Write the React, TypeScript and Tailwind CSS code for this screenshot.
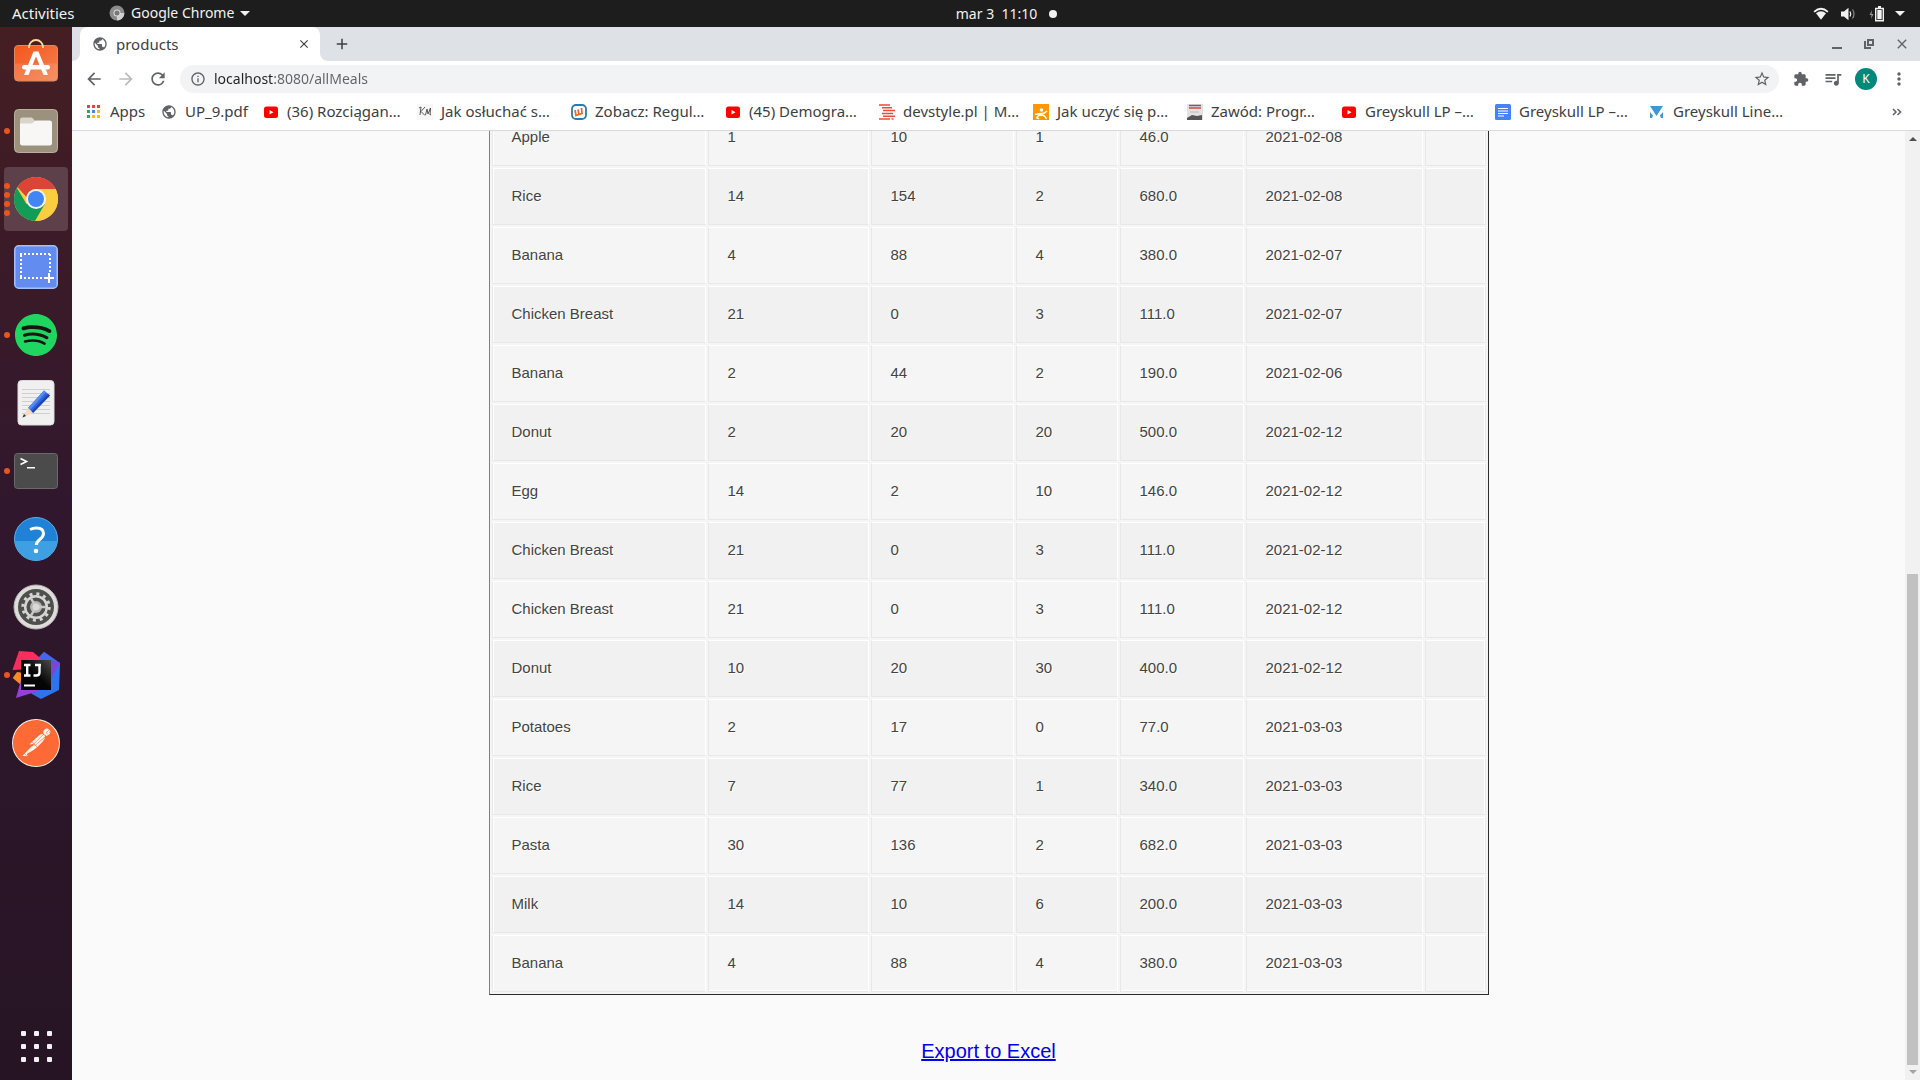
import type { ReactNode } from "react";
import {
  MdArrowBack,
  MdArrowForward,
  MdClose,
  MdExtension,
  MdInfoOutline,
  MdMoreVert,
  MdAdd,
  MdPublic,
  MdQueueMusic,
  MdRefresh,
  MdStarBorder,
} from "react-icons/md";
import { SiPostman, SiSpotify } from "react-icons/si";

const meals = [
  ["Apple", "1", "10", "1", "46.0", "2021-02-08"],
  ["Rice", "14", "154", "2", "680.0", "2021-02-08"],
  ["Banana", "4", "88", "4", "380.0", "2021-02-07"],
  ["Chicken Breast", "21", "0", "3", "111.0", "2021-02-07"],
  ["Banana", "2", "44", "2", "190.0", "2021-02-06"],
  ["Donut", "2", "20", "20", "500.0", "2021-02-12"],
  ["Egg", "14", "2", "10", "146.0", "2021-02-12"],
  ["Chicken Breast", "21", "0", "3", "111.0", "2021-02-12"],
  ["Chicken Breast", "21", "0", "3", "111.0", "2021-02-12"],
  ["Donut", "10", "20", "30", "400.0", "2021-02-12"],
  ["Potatoes", "2", "17", "0", "77.0", "2021-03-03"],
  ["Rice", "7", "77", "1", "340.0", "2021-03-03"],
  ["Pasta", "30", "136", "2", "682.0", "2021-03-03"],
  ["Milk", "14", "10", "6", "200.0", "2021-03-03"],
  ["Banana", "4", "88", "4", "380.0", "2021-03-03"],
];

/* ---------- dock icons ---------- */

function SoftwareIcon() {
  return (
    <svg viewBox="0 0 44 48" className="h-12 w-11">
      <defs>
        <linearGradient id="bag" x1="0" y1="0" x2="1" y2="1">
          <stop offset="0" stopColor="#f5561d" />
          <stop offset="1" stopColor="#f38250" />
        </linearGradient>
      </defs>
      <rect x="0.5" y="6.5" width="43" height="35.5" rx="3.5" fill="url(#bag)" stroke="#d98b62" />
      <path d="M1 24.5h42v14a3 3 0 0 1-3 3H4a3 3 0 0 1-3-3z" fill="#fff" opacity=".12" />
      <path d="M15 9V8a7 7 0 0 1 14 0v1" fill="none" stroke="#f9dca4" strokeWidth="1.8" />
      <path d="M19.500 12.500h5L34 36h-4.500L22 17.500 14.500 36H10z" fill="#fff" />
      <rect x="8" y="26" width="28" height="4.500" rx="2.200" fill="#fff" />
    </svg>
  );
}

function FilesIcon() {
  return (
    <svg viewBox="0 0 44 44" className="size-11">
      <rect x=".5" y=".5" width="43" height="43" rx="4" fill="#9b917c" stroke="#b9b1a0" />
      <path d="M6 11a2.500 2.500 0 0 1 2.500-2.500H18l3.500 4H30V20H6z" fill="#d9d5ca" />
      <path d="M6 14.500h12l3.500-3h14A2.500 2.500 0 0 1 38 14v20a2.500 2.500 0 0 1-2.500 2.500h-27A2.500 2.500 0 0 1 6 34z" fill="#f8f7f5" />
    </svg>
  );
}

function ChromeIcon() {
  return (
    <svg viewBox="0 0 44 44" className="size-11">
      <circle cx="22" cy="22" r="22" fill="#fdcd40" />
      <path d="M2.950 11A22 22 0 0 0 22 44L31.500 27.500 22 22 12.500 27z" fill="#129c58" />
      <path d="M22 12h19.600A22 22 0 0 1 21 44l9.800-17z" fill="#fdcd40" />
      <path d="M3.500 10.200A22 22 0 0 1 41.600 12H22q-8 1-9.500 8z" fill="#db4437" />
      <circle cx="22" cy="22" r="10" fill="#f4f4f4" />
      <circle cx="22" cy="22" r="8" fill="#4285f4" />
    </svg>
  );
}

function ScreenshotIcon() {
  return (
    <svg viewBox="0 0 44 44" className="size-11">
      <rect x=".75" y=".75" width="42.500" height="42.500" rx="4" fill="#628cf0" stroke="#a3bffa" strokeWidth="1.500" />
      <path d="M6 9h31M7 10v24M36 9v18M6 33h23" fill="none" stroke="#fff" strokeWidth="2" strokeDasharray="2 2" />
      <path d="M35 28v10M30 33h10" stroke="#fff" strokeWidth="2" />
    </svg>
  );
}

function SpotifyIcon() {
  return (
    <span className="flex size-[42px] items-center justify-center rounded-full bg-[#191414]">
      <SiSpotify className="size-[42px] text-[#1fd760]" />
    </span>
  );
}

function EditorIcon() {
  return (
    <svg viewBox="0 0 44 46" className="h-[46px] w-11">
      <rect x="4" y=".5" width="36" height="44.500" rx="3.500" fill="#f0f0f0" stroke="#dcdcdc" />
      <path d="M8 9.500h28M8 13.500h28M8 17.500h28M8 21.500h28M8 25.500h28M8 29.500h28M8 33.500h28" stroke="#cfcfcf" />
      <path d="M14 28L30 10.500l6 5L19 33z" fill="#2f65e0" />
      <path d="M14 28L30 10.500l2 1.700L16 30z" fill="#5a8bf2" />
      <path d="M17.500 31.500L34 14l2 1.500L19 33z" fill="#1c46b4" />
      <path d="M14 28l5 5-10.500 4.500z" fill="#f7d9bd" />
      <path d="M10 34l2 2-3.500 1.500z" fill="#333" />
    </svg>
  );
}

function TerminalIcon() {
  return (
    <svg viewBox="0 0 44 36" className="h-9 w-11">
      <rect x=".5" y=".5" width="43" height="35" rx="3" fill="#4b4b4b" stroke="#6a6a6a" />
      <path d="M6.500 5.500l6 3-6 3M13 14.700h8" fill="none" stroke="#fff" strokeWidth="1.600" />
    </svg>
  );
}

function HelpIcon() {
  return (
    <svg viewBox="0 0 44 44" className="size-11">
      <circle cx="22" cy="22" r="21.500" fill="#1f82d6" stroke="#5ab0ea" />
      <path d="M.8 24h42.400A21.300 21.300 0 0 1 .8 24z" fill="#3f9fe3" />
      <path d="M16 12.500c2-1 4-1.600 6.500-1.600 4.500 0 7 2.200 7 5.600 0 5.500-7.200 6-7.200 11.500" fill="none" stroke="#fff" strokeWidth="3" />
      <circle cx="22" cy="34" r="2.300" fill="#fff" />
    </svg>
  );
}

function SettingsIcon() {
  return (
    <svg viewBox="0 0 46 46" className="size-[46px]">
      <circle cx="23" cy="23" r="22" fill="#dedddb" stroke="#b9b8b6" />
      <circle cx="23" cy="23" r="18" fill="#4f4f4d" />
      <circle cx="23" cy="23" r="13.200" fill="none" stroke="#d5d5d3" strokeWidth="3" strokeDasharray="3 3.910" />
      <circle cx="23" cy="23" r="10.800" fill="none" stroke="#d5d5d3" strokeWidth="2.500" />
      <circle cx="23" cy="23" r="6" fill="#b5b5b3" />
      <path d="M23 23h10M23 23l-5-8.700M23 23l-5 8.700" stroke="#c8c8c6" strokeWidth="2.500" />
      <circle cx="23" cy="23" r="3.500" fill="#d9d9d7" />
    </svg>
  );
}

function IdeaIcon() {
  return (
    <svg viewBox="0 0 48 48" className="size-12">
      <defs>
        <linearGradient id="ideaBlue" x1="0" y1="0" x2="1" y2="1">
          <stop offset="0" stopColor="#5a5be8" />
          <stop offset="1" stopColor="#1f7cf0" />
        </linearGradient>
        <linearGradient id="ideaScreen" x1="1" y1="0" x2="0" y2="1">
          <stop offset="0" stopColor="#4a4a4a" />
          <stop offset=".5" stopColor="#050505" />
        </linearGradient>
      </defs>
      <path d="M32 .7L48 12l-1 27-18 9-9-5-6-7L27 6z" fill="url(#ideaBlue)" />
      <path d="M48 12l-9 15V9z" fill="#7b45d6" />
      <path d="M7 0l14 1 6 5 4 6-11 6L.500 19z" fill="#fb2d5c" />
      <path d="M5 21l7 1v12H9L.700 27z" fill="#fb8a24" />
      <path d="M9 29h7l13 9-9 4L4 47z" fill="#9a3fd6" />
      <rect x="9" y="9" width="30" height="30" fill="url(#ideaScreen)" />
      <path d="M12 14h6.500M15.200 14v10M12 24.500h6.500M23 14h6M27.500 14v7.500q0 3-3 3h-3" fill="none" stroke="#fff" strokeWidth="2.400" />
      <path d="M12 34.500h11" stroke="#fff" strokeWidth="2" />
    </svg>
  );
}

function PostmanIcon() {
  return (
    <span className="flex size-12 items-center justify-center rounded-full bg-[#fbf3ee]">
      <SiPostman className="size-[46px] text-[#fd6a35]" />
    </span>
  );
}

const dock: { label: string; icon: ReactNode; dots: number }[] = [
  { label: "Ubuntu Software", icon: <SoftwareIcon />, dots: 0 },
  { label: "Files", icon: <FilesIcon />, dots: 1 },
  { label: "Google Chrome", icon: <ChromeIcon />, dots: 4 },
  { label: "Screenshot", icon: <ScreenshotIcon />, dots: 0 },
  { label: "Spotify", icon: <SpotifyIcon />, dots: 1 },
  { label: "Text Editor", icon: <EditorIcon />, dots: 0 },
  { label: "Terminal", icon: <TerminalIcon />, dots: 1 },
  { label: "Help", icon: <HelpIcon />, dots: 0 },
  { label: "Settings", icon: <SettingsIcon />, dots: 0 },
  { label: "IntelliJ IDEA", icon: <IdeaIcon />, dots: 1 },
  { label: "Postman", icon: <PostmanIcon />, dots: 0 },
];

/* ---------- bookmark icons ---------- */

function YoutubeIcon() {
  return (
    <svg viewBox="0 0 16 16" className="size-4">
      <rect x="1" y="2.500" width="14" height="11.500" rx="2.500" fill="#f00" />
      <path d="M6.500 6v4.500l4-2.250z" fill="#fff" />
    </svg>
  );
}

function SketchIcon() {
  return (
    <svg viewBox="0 0 16 16" className="size-4">
      <rect width="16" height="16" fill="#f7f7f7" />
      <path d="M4 3L3 11M8 3L4 7.500l4 4M2 4l2-1M8.500 11l1.500-6 1 5 2.500-6-.5 7 1-.5" fill="none" stroke="#444" strokeWidth=".9" />
    </svg>
  );
}

function WykopIcon() {
  return (
    <svg viewBox="0 0 16 16" className="size-4">
      <rect x="1" y="1" width="14" height="14" rx="4" fill="#fff" stroke="#2a7ab0" strokeWidth="1.800" />
      <path d="M4 6l1 5.500 3-1-1-5M8 10.500l3-1L10.500 4" fill="none" stroke="#f0641e" strokeWidth="1.700" />
    </svg>
  );
}

function DevstyleIcon() {
  return (
    <svg viewBox="0 0 16 16" className="size-4">
      <path d="M0 1h11M3 3.800h10M4 6.600h12M3 9.400h11M4 12.200h12M0 15h11M12.500 15h2" stroke="#f0483e" strokeWidth="1.500" />
    </svg>
  );
}

function LearnIcon() {
  return (
    <svg viewBox="0 0 16 16" className="size-4">
      <rect width="16" height="16" fill="#ff9800" />
      <circle cx="8.500" cy="6" r="1.800" fill="#fff" />
      <path d="M2 10c3 1 5-1 7-.5 2 .5 3-.5 5-2.500M4 15c0-3 2-4 4.500-4s4 2 5 4M3 13l3 2" fill="none" stroke="#fff" strokeWidth="1.500" />
    </svg>
  );
}

function BookIcon() {
  return (
    <svg viewBox="0 0 16 16" className="size-4">
      <rect width="16" height="16" fill="#e3e3e3" />
      <path d="M2 1.500h12" stroke="#666" strokeWidth="1.500" />
      <path d="M2 4h12" stroke="#d8483c" strokeWidth="1.500" />
      <path d="M3 8h9" stroke="#bbb" />
      <path d="M0 14l5-3 5 1 5-1v5H0z" fill="#555" />
    </svg>
  );
}

function DocsIcon() {
  return (
    <svg viewBox="0 0 16 16" className="size-4">
      <rect width="16" height="16" rx="1.500" fill="#4285f4" />
      <path d="M3 4.500h10M3 7h10M3 9.500h10M3 12h6" stroke="#fff" strokeWidth="1.200" />
    </svg>
  );
}

function MountainIcon() {
  return (
    <svg viewBox="0 0 16 16" className="size-4">
      <path d="M1 2h13L7.500 12z" fill="#3f97d3" />
      <path d="M1 8l3 3.500L3 14H1zM14 8l-3 3.500 1 2.500h2z" fill="#3f97d3" />
    </svg>
  );
}

const bookmarks: { label: string; icon: ReactNode }[] = [
  { label: "(36) Rozciągan…", icon: <YoutubeIcon /> },
  { label: "Jak osłuchać s…", icon: <SketchIcon /> },
  { label: "Zobacz: Regul…", icon: <WykopIcon /> },
  { label: "(45) Demogra…", icon: <YoutubeIcon /> },
  { label: "devstyle.pl | M…", icon: <DevstyleIcon /> },
  { label: "Jak uczyć się p…", icon: <LearnIcon /> },
  { label: "Zawód: Progr…", icon: <BookIcon /> },
  { label: "Greyskull LP –…", icon: <YoutubeIcon /> },
  { label: "Greyskull LP –…", icon: <DocsIcon /> },
  { label: "Greyskull Line…", icon: <MountainIcon /> },
];

function AppsIcon() {
  const colors = ["#ea4335", "#ea4335", "#ea4335", "#34a853", "#4285f4", "#fbbc05", "#34a853", "#fbbc05", "#fbbc05"];
  return (
    <svg viewBox="0 0 16 16" className="size-4">
      {colors.map((c, i) => (
        <rect key={i} x={1 + (i % 3) * 5} y={1 + Math.floor(i / 3) * 5} width="3" height="3" fill={c} />
      ))}
    </svg>
  );
}

function TopBar() {
  return (
    <header className="flex h-[27px] shrink-0 items-center bg-[#1d1d1d] text-sm text-[#f2f2f2]">
      <div className="flex flex-1 items-center pl-3">
        <button className="w-[97px] text-left text-[15px]">Activities</button>
        <button className="flex items-center gap-1.5">
          <svg viewBox="0 0 16 16" className="size-4">
            <circle cx="8" cy="8" r="7.500" fill="#8b8b8b" />
            <path d="M8 8h7.300A7.500 7.500 0 0 1 8 15.500z" fill="#d0d0d0" />
            <circle cx="8" cy="8" r="3.500" fill="#ddd" />
            <circle cx="8" cy="8" r="2.500" fill="#777" />
          </svg>
          Google Chrome
          <svg viewBox="0 0 10 5" className="h-[5px] w-2.5">
            <path d="M0 0h10L5 5z" fill="currentColor" />
          </svg>
        </button>
      </div>
      <button className="flex items-center gap-3 pl-24">
        <span className="whitespace-pre">mar 3  11:10</span>
        <span className="size-2 rounded-full bg-[#f2f2f2]" />
      </button>
      <div className="flex flex-1 items-center justify-end pr-[15px]">
        <button aria-label="System menu" className="flex items-center">
          <svg viewBox="0 0 16 14" className="mr-3 h-3.5 w-4">
            <path d="M.5 4.200Q8-2.500 15.500 4.200L14.300 5.500Q8 0 1.700 5.500z" fill="#f2f2f2" />
            <path d="M3 6.200Q8 2.500 13 6.200L8 12.800z" fill="#f2f2f2" />
          </svg>
          <svg viewBox="0 0 16 14" className="mr-3 h-3.5 w-4">
            <path d="M0 4.500h3L7.500.8v12.400L3 9.500H0z" fill="#f2f2f2" />
            <path d="M9 4.500q1.500 2.500 0 5" fill="none" stroke="#f2f2f2" strokeWidth="1.300" />
            <path d="M11.500 2.500q3 4.500 0 9" fill="none" stroke="#888" strokeWidth="1.200" />
          </svg>
          <svg viewBox="0 0 16 16" className="mr-2.5 size-4">
            <path d="M3 4L.5 9h2L2 13l2.500-5h-2z" fill="#999" />
            <path d="M6.700 2.500h7.600v12.300H6.700z" fill="none" stroke="#f2f2f2" strokeWidth="1.400" />
            <path d="M8.300 4h4.400v9.300H8.300zM9 0h3v2H9z" fill="#f2f2f2" />
          </svg>
          <svg viewBox="0 0 10 5" className="h-[5px] w-2.5">
            <path d="M0 0h10L5 5z" fill="#f2f2f2" />
          </svg>
        </button>
      </div>
    </header>
  );
}

function Dock() {
  return (
    <nav className="flex w-[72px] shrink-0 flex-col items-center justify-between bg-linear-to-b from-[#451e22] via-[#31172d] via-45% to-[#261424] pt-1 pb-[18px]">
      <ul className="flex flex-col gap-1">
        {dock.map((d) => (
          <li key={d.label}>
            <button
              aria-label={d.label}
              className={
                d.dots === 4
                  ? "relative flex size-16 items-center justify-center rounded bg-[#5d4049]"
                  : "relative flex size-16 items-center justify-center rounded"
              }
            >
              {d.icon}
              <span className="absolute inset-y-0 left-0 flex flex-col justify-center gap-[3px]">
                {Array.from({ length: d.dots }, (_, i) => (
                  <span key={i} className="size-1.5 rounded-full bg-[#e95420]" />
                ))}
              </span>
            </button>
          </li>
        ))}
      </ul>
      <button aria-label="Show Applications" className="grid grid-cols-3 gap-2">
        {Array.from({ length: 9 }, (_, i) => (
          <span key={i} className="size-[5px] rounded-[1px] bg-[#f2f2f2]" />
        ))}
      </button>
    </nav>
  );
}

function TabStrip() {
  return (
    <div className="flex h-[34px] shrink-0 items-stretch bg-[#dee1e6]">
      <div className="w-2 bg-white">
        <div className="h-full rounded-br-lg bg-[#dee1e6]" />
      </div>
      <div className="flex w-60 items-center rounded-t-lg bg-white pr-2 pl-3 text-[#3c4043]">
        <MdPublic className="size-4 text-[#5f6368]" />
        <span className="ml-2 flex-1 text-[15px]">products</span>
        <button aria-label="Close tab" className="flex size-4 items-center justify-center">
          <MdClose className="size-3.5" />
        </button>
      </div>
      <div className="w-2 bg-white">
        <div className="h-full rounded-bl-lg bg-[#dee1e6]" />
      </div>
      <button aria-label="New tab" className="flex w-7 items-center justify-center text-[#3c4043]">
        <MdAdd className="size-[18px]" />
      </button>
      <div className="flex flex-1 items-center justify-end gap-4 pr-2.5 text-[#5f6368]">
        <button aria-label="Minimize">
          <svg viewBox="0 0 16 16" className="size-4">
            <path d="M2 12h10" stroke="currentColor" strokeWidth="2" />
          </svg>
        </button>
        <button aria-label="Restore">
          <svg viewBox="0 0 16 16" className="size-4">
            <path d="M6 4h5v5H6zM3 5v7h6" fill="none" stroke="currentColor" strokeWidth="2" />
          </svg>
        </button>
        <button aria-label="Close window">
          <MdClose className="size-4 stroke-current" />
        </button>
      </div>
    </div>
  );
}

function Toolbar() {
  return (
    <div className="flex shrink-0 items-center bg-white py-1 pr-[11px] pl-3 text-[#5f6368]">
      <button aria-label="Back" className="mr-3 flex size-5 items-center justify-center">
        <MdArrowBack className="size-5" />
      </button>
      <button aria-label="Forward" className="mr-3 flex size-5 items-center justify-center text-[#babcbe]">
        <MdArrowForward className="size-5" />
      </button>
      <button aria-label="Reload" className="mr-3 flex size-5 items-center justify-center">
        <MdRefresh className="size-5" />
      </button>
      <div className="flex h-7 flex-1 items-center rounded-full bg-[#f1f3f4] pr-2 pl-2.5">
        <MdInfoOutline className="size-4" />
        <input
          aria-label="Address"
          defaultValue="localhost:8080/allMeals"
          className="ml-2 min-w-0 flex-1 bg-linear-to-r from-[#202124] from-[59px] to-[#5f6368] to-[59px] bg-clip-text text-sm text-transparent outline-none"
        />
        <button aria-label="Bookmark this page">
          <MdStarBorder className="size-[18px]" />
        </button>
      </div>
      <button aria-label="Extensions" className="ml-3.5">
        <MdExtension className="size-4" />
      </button>
      <button aria-label="Media" className="ml-3.5">
        <MdQueueMusic className="size-5" />
      </button>
      <button aria-label="Profile" className="ml-3 flex size-[22px] items-center justify-center rounded-full bg-[#00897b] text-xs text-white">
        K
      </button>
      <button aria-label="Menu" className="ml-3">
        <MdMoreVert className="size-5" />
      </button>
    </div>
  );
}

function BookmarksBar() {
  return (
    <div className="flex h-[34px] shrink-0 items-center border-b border-[#d8dadd] bg-white pr-[18px] pb-1 pl-3.5 text-[15px] whitespace-nowrap text-[#3c4043]">
      <a href="#apps" className="flex w-[75px] shrink-0 items-center gap-2">
        <AppsIcon />
        Apps
      </a>
      <a href="#up9" className="flex w-[102px] shrink-0 items-center gap-2">
        <MdPublic className="size-4 text-[#5f6368]" />
        UP_9.pdf
      </a>
      {bookmarks.map((b, i) => (
        <a key={i} href="#bookmark" className="flex w-[154px] shrink-0 items-center gap-2">
          {b.icon}
          {b.label}
        </a>
      ))}
      <button aria-label="More bookmarks" className="ml-auto">
        <svg viewBox="0 0 10 8" className="h-2 w-2.5">
          <path d="M1 1l3 3-3 3M5.500 1l3 3-3 3" fill="none" stroke="#5f6368" strokeWidth="1.500" />
        </svg>
      </button>
    </div>
  );
}

function MealsTable() {
  return (
    <table className="w-[1000px] shrink-0 table-fixed border-separate border-spacing-[2px] border border-t-[#808080] border-r-[#2c2c2c] border-b-[#2c2c2c] border-l-[#808080] bg-[#f5f5f5] text-[15px] text-[#444]">
      <colgroup>
        <col className="w-[214px]" />
        <col className="w-[161px]" />
        <col className="w-[143px]" />
        <col className="w-[102px]" />
        <col className="w-[124px]" />
        <col className="w-[177px]" />
        <col className="w-[61px]" />
      </colgroup>
      <tbody>
        {meals.map((row, r) => (
          <tr key={r} className="group bg-[#f5f5f5] even:bg-[#f1f1f1]">
            {[...row, ""].map((cell, c) => (
              <td
                key={c}
                className="h-[57px] border border-t-white border-r-white border-b-[#e8e8e8] border-l-[#e8e8e8] px-[19px] [text-shadow:1px_1px_0_#fff] first:shadow-[inset_1px_0_0_#fff] last:border-r-[#e8e8e8] last:shadow-[inset_-1px_0_0_#fff] group-last:shadow-[inset_0_-1px_0_#fff]"
              >
                {cell}
              </td>
            ))}
          </tr>
        ))}
      </tbody>
    </table>
  );
}

function Scrollbar() {
  return (
    <div className="flex w-[15px] shrink-0 flex-col items-center bg-[#f1f1f1] py-1.5">
      <svg viewBox="0 0 8 4" className="h-1 w-2 shrink-0">
        <path d="M0 4h8L4 0z" fill="#505050" />
      </svg>
      <div className="flex-[15]" />
      <div className="mb-[5px] w-[11px] flex-[17] bg-[#c1c1c1]" />
      <svg viewBox="0 0 8 4" className="h-1 w-2 shrink-0">
        <path d="M0 0h8L4 4z" fill="#a3a3a3" />
      </svg>
    </div>
  );
}

export default function App() {
  return (
    <div className="flex h-screen flex-col overflow-hidden font-['Noto_Sans',sans-serif]">
      <TopBar />
      <div className="flex min-h-0 flex-1">
        <Dock />
        <div className="flex min-w-0 flex-1 flex-col">
          <TabStrip />
          <Toolbar />
          <BookmarksBar />
          <div className="flex min-h-0 flex-1 bg-[#fafafa]">
            <main className="flex flex-1 flex-col items-center justify-end overflow-hidden font-['Liberation_Sans',Arial,sans-serif]">
              <MealsTable />
              <a href="#export" className="mt-11 mb-[17px] text-xl leading-6 text-[#0000ee] underline">
                Export to Excel
              </a>
            </main>
            <Scrollbar />
          </div>
        </div>
      </div>
    </div>
  );
}
